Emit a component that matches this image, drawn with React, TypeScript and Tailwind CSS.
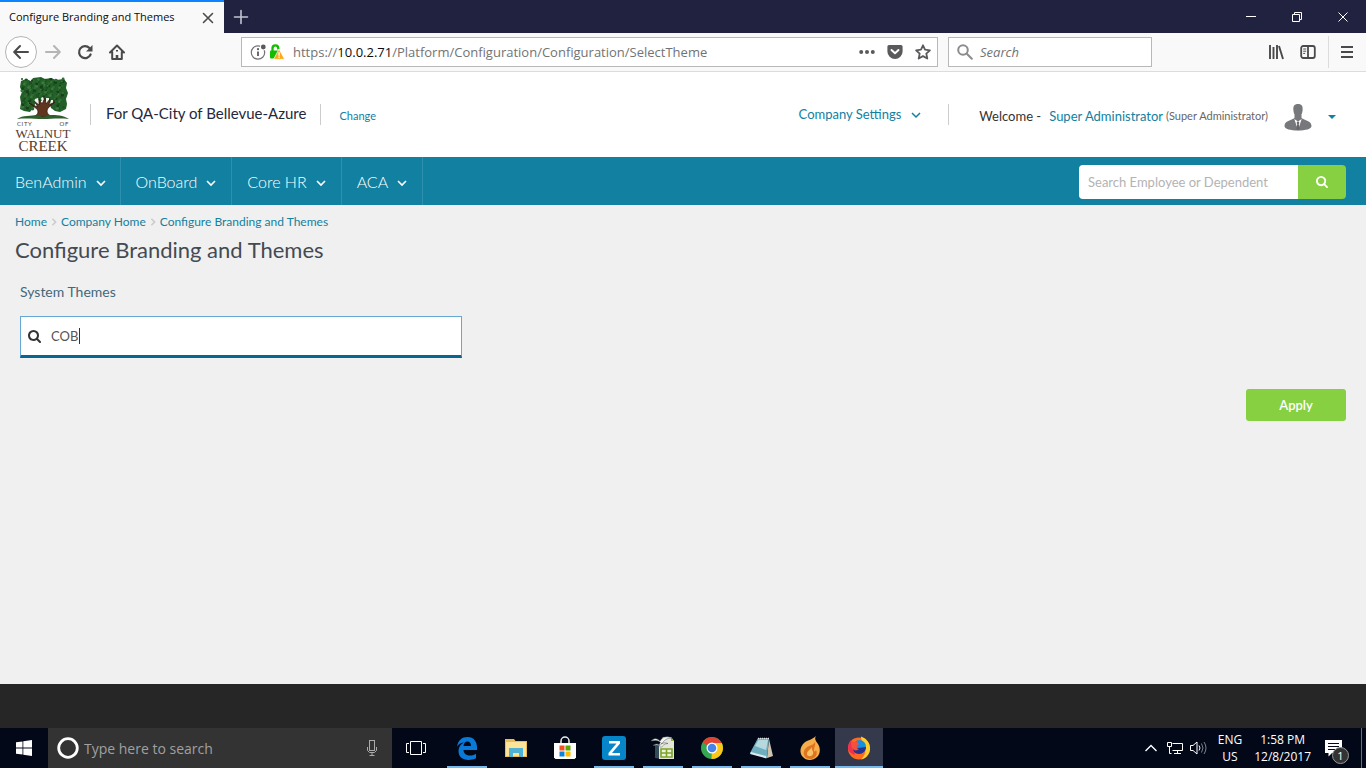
import { useState } from "react";
import type { ReactNode } from "react";

const uiFont = "font-['Open_Sans','Noto_Sans',sans-serif]";
const teal = "text-[#1280a1]";

function Magnifier({ className }: { className: string }) {
  return (
    <svg viewBox="0 0 1664 1664" className={className} fill="currentColor" aria-hidden="true">
      <path d="M1152 704q0-185-131.500-316.500t-316.500-131.500-316.500 131.500-131.500 316.500 131.500 316.500 316.500 131.500 316.500-131.500 131.500-316.500zM1664 1536q0 52-38 90t-90 38q-54 0-90-38l-343-342q-179 124-399 124-143 0-273.500-55.500t-225-150-150-225-55.500-273.500 55.500-273.500 150-225 225-150 273.500-55.500 273.500 55.500 225 150 150 225 55.500 273.500q0 220-124 399l343 343q37 37 37 90z" />
    </svg>
  );
}

function Chevron({ className, stroke = 2 }: { className: string; stroke?: number }) {
  return (
    <svg viewBox="0 0 10 10" className={className} fill="none" stroke="currentColor" strokeWidth={stroke} aria-hidden="true">
      <path d="M1 3l4 4 4-4" />
    </svg>
  );
}

function TitleBar() {
  return (
    <div className="flex h-[33px] bg-[#20223f]">
      <div className="flex w-56 items-center justify-between border-t-2 border-[#0a84ff] bg-[#f9f9fa] pr-2 pl-[9px]">
        <span className="text-[11px] whitespace-nowrap text-[#0c0c0d]">Configure Branding and Themes</span>
        <button aria-label="Close tab" className="flex size-4 items-center justify-center">
          <svg viewBox="0 0 16 16" className="size-4" stroke="#4a4a4c" strokeWidth="1.600" strokeLinecap="round">
            <path d="M3.500 3.500l9 9M12.500 3.500l-9 9" />
          </svg>
        </button>
      </div>
      <button aria-label="New tab" className="flex w-[34px] items-center justify-center">
        <svg viewBox="0 0 16 16" className="size-4" stroke="#c4c5d0" strokeWidth="1.600" strokeLinecap="round">
          <path d="M8 1.500v13M1.500 8h13" />
        </svg>
      </button>
      <div className="ml-auto flex text-white">
        <button aria-label="Minimize" className="flex w-[46px] items-center justify-center">
          <svg viewBox="0 0 10 10" className="size-2.5" stroke="currentColor" fill="none"><path d="M0 4.500h10" /></svg>
        </button>
        <button aria-label="Restore" className="flex w-[46px] items-center justify-center">
          <svg viewBox="0 0 10 10" className="size-2.5" stroke="currentColor" fill="none">
            <path d="M.5 2.500h7v7h-7zM2.500 2.500v-2h7v7h-2" />
          </svg>
        </button>
        <button aria-label="Close" className="flex w-[46px] items-center justify-center">
          <svg viewBox="0 0 10 10" className="size-2.5" stroke="currentColor" fill="none"><path d="M.5 .5l9 9M9.500 .5l-9 9" /></svg>
        </button>
      </div>
    </div>
  );
}

function Toolbar() {
  return (
    <div className="flex h-[39px] items-center border-b border-[#dcdcdd] bg-[#f9f9fa] pr-3 pl-[5px] text-[#4a4a4c]">
      <button aria-label="Back" className="flex size-8 items-center justify-center rounded-full border border-[#b4b4b5] bg-white">
        <svg viewBox="0 0 16 16" className="size-4" fill="none" stroke="currentColor" strokeWidth="2" strokeLinecap="round" strokeLinejoin="round">
          <path d="M15 8H1.500M7 2L1.200 8 7 14" />
        </svg>
      </button>
      <button aria-label="Forward" className="flex size-8 items-center justify-center text-[#b5b5b7]">
        <svg viewBox="0 0 16 16" className="size-4" fill="none" stroke="currentColor" strokeWidth="2" strokeLinecap="round" strokeLinejoin="round">
          <path d="M1 8h13.500M9 2l5.800 6L9 14" />
        </svg>
      </button>
      <button aria-label="Reload" className="flex size-8 items-center justify-center">
        <svg viewBox="0 0 16 16" className="size-4" fill="none" stroke="currentColor" strokeWidth="2.200">
          <path d="M13.600 10.500A6 6 0 1 1 12.400 4" strokeLinecap="round" />
          <path d="M15.500 1v6.500H9z" fill="currentColor" stroke="none" />
        </svg>
      </button>
      <button aria-label="Home" className="flex size-8 items-center justify-center">
        <svg viewBox="0 0 16 16" className="size-4" fill="none" stroke="currentColor" strokeWidth="2" strokeLinejoin="round" strokeLinecap="round">
          <path d="M1 8.500L8 1.500l7 7M3.200 8v7h9.600V8" />
          <path d="M8 15v-4" strokeWidth="2.600" strokeLinecap="butt" />
          <path d="M8 6v1.500" strokeWidth="2" strokeLinecap="butt" />
        </svg>
      </button>
      <div className="w-[108px]" />
      <div className="flex h-[30px] flex-1 items-center border border-[#b8b8b9] bg-white pr-1.5 pl-2">
        <svg viewBox="0 0 18 16" className="h-4 w-[18px]" fill="none" aria-hidden="true">
          <circle cx="8" cy="8.500" r="6.700" stroke="#737373" strokeWidth="1.200" />
          <path d="M8 7.500V12" stroke="#5a5a5c" strokeWidth="1.800" />
          <circle cx="8" cy="5.200" r="1.100" fill="#5a5a5c" />
          <circle cx="13.300" cy="3" r="3.400" fill="#fff" />
          <circle cx="13.300" cy="3" r="2.400" fill="#5a5a5c" />
        </svg>
        <svg viewBox="0 0 16 16" className="ml-px size-4" aria-hidden="true">
          <path d="M3.500 7.500V4.200a2.900 2.900 0 0 1 5.800 0V5.500" fill="none" stroke="#12bc00" strokeWidth="2.300" />
          <rect x="1" y="6.500" width="9" height="8" rx="1" fill="#12bc00" />
          <path d="M10 5l5.600 10.300H4.600z" fill="#ffa814" stroke="#fff" strokeWidth=".7" strokeLinejoin="round" />
          <path d="M10.100 8.300v3.400M10.100 12.600v1.500" stroke="#fff" strokeWidth="1.400" />
        </svg>
        <span className="ml-2 flex-1 pt-0.5 text-[13px] whitespace-nowrap text-[#737373]">
          https://<span className="text-[#0c0c0d]">10.0.2.71</span>/Platform/Configuration/Configuration/SelectTheme
        </span>
        <div className="flex items-center gap-3">
          <button aria-label="Page actions">
            <svg viewBox="0 0 16 16" className="size-4" fill="#5a5a5c"><circle cx="2.200" cy="8" r="2" /><circle cx="8" cy="8" r="2" /><circle cx="13.800" cy="8" r="2" /></svg>
          </button>
          <button aria-label="Save to Pocket">
            <svg viewBox="0 0 16 16" className="size-4">
              <path d="M2 1h12a1.600 1.600 0 0 1 1.600 1.600V7.400a7.600 7.600 0 0 1-15.200 0V2.600A1.600 1.600 0 0 1 2 1z" fill="#5a5a5c" />
              <path d="M4.500 6L8 9.300 11.500 6" fill="none" stroke="#fff" strokeWidth="1.900" strokeLinecap="round" strokeLinejoin="round" />
            </svg>
          </button>
          <button aria-label="Bookmark this page">
            <svg viewBox="0 0 16 16" className="size-4" fill="none" stroke="#5a5a5c" strokeWidth="1.800" strokeLinejoin="round">
              <path d="M8 1.300l2 4.400 4.900.6-3.600 3.300 1 4.900L8 12.100l-4.300 2.400 1-4.900L1.100 6.300 6 5.700z" />
            </svg>
          </button>
        </div>
      </div>
      <label className="ml-2.5 flex h-[30px] w-[204px] items-center border border-[#b8b8b9] bg-white pl-2">
        <svg viewBox="0 0 16 16" className="size-4 shrink-0" fill="none" stroke="#8c8c8e" strokeWidth="2" strokeLinecap="round" aria-hidden="true">
          <circle cx="6" cy="6" r="4.800" /><path d="M9.800 9.800l5 5" />
        </svg>
        <input aria-label="Web search" placeholder="Search" className="ml-[7px] min-w-0 flex-1 pt-0.5 text-[13px] italic outline-none placeholder:text-[#737373]" />
      </label>
      <div className="w-[116px]" />
      <button aria-label="Library" className="flex w-4">
        <svg viewBox="0 0 16 16" className="size-4" stroke="currentColor" strokeWidth="1.900">
          <path d="M2 1v14M5.500 3v12M9 1v14M11 2l4 13" />
        </svg>
      </button>
      <button aria-label="Sidebars" className="ml-4 flex w-4">
        <svg viewBox="0 0 16 16" className="size-4" fill="none" stroke="currentColor" strokeWidth="1.800">
          <rect x="1.200" y="2" width="13.600" height="12" rx="2" /><path d="M8 2v12" /><path d="M3.200 5h3M3.200 7.200h3M3.200 9.400h2" strokeWidth="1" />
        </svg>
      </button>
      <div className="mr-[11px] ml-3 h-8 w-px bg-[#dcdcdd]" />
      <button aria-label="Open menu" className="flex">
        <svg viewBox="0 0 14 14" className="size-3.5" stroke="currentColor" strokeWidth="2"><path d="M1 2h12M1 7h12M1 12h12" /></svg>
      </button>
    </div>
  );
}

const leafGreens = ["#1c5222", "#2d6b30", "#173f1c", "#3a7a38"];

const leaves = Array.from({ length: 190 }, (_, i) => ({
  x: 5 + ((i * 61) % 191) * 0.22,
  y: 3 + ((i * 37) % 97) * 0.31,
  r: 1 + (i % 3) * 0.4,
  fill: leafGreens[i % 4],
})).filter(({ x, y }) => !(y > 23 && x > 16 && x < 37));

function Logo() {
  return (
    <a href="#home" aria-label="City of Walnut Creek" className="flex w-14 flex-col items-center text-[#5a3a2a]">
      <svg viewBox="0 0 52 45" className="h-[45px] w-[52px]" aria-hidden="true">
        <path d="M4 5l5-2 5 2 2-3 8-1 4 2 6-1 5 2 8-1 3 4-1 5 2 5-2 6 1 5-1 5-6 3-5-1-4-3-2-7h-13l-2 6-4 5-6-1-4-2 1-6-1-6 2-5-2-5z" fill="#235f28" />
        {leaves.map((leaf, i) => (
          <circle key={i} cx={leaf.x} cy={leaf.y} r={leaf.r} fill={leaf.fill} />
        ))}
        <path d="M18 23l3-1 1 3-2 2-3-1zM24 22l2-1 1 3-2 2zM29 22l3 0 0 3-3 2zM34 24l2 0 0 3-3 1z" fill="#eef2ea" />
        <path d="M12 27l6 3 3 1-4-6 5 4 0-6 3 5 3-6 1 6 4-5-1 6 6-3-7 6c-2 4-1 6 4 9H16c5-2 6-5 4-8z" fill="#60361e" stroke="#2b1c12" strokeWidth=".8" />
        <path d="M0 43c6-4 14-3 20-4l6 2 6-2c8 0 14 0 20 4-10-1-18 0-26 0s-17-1-26 0z" fill="#2d5e2b" />
      </svg>
      <span className="flex w-full justify-between px-0.5 text-[6px] leading-[6px]"><span className="tracking-widest">CITY</span><span className="tracking-widest">OF</span></span>
      <span className="font-['Liberation_Serif',serif] text-[13px] leading-[13px]">WALNUT</span>
      <span className="font-['Liberation_Serif',serif] text-[15px] leading-[13px]">CREEK</span>
    </a>
  );
}

function SiteHeader() {
  return (
    <header className="flex h-[85px] items-center bg-white pr-[30px] pl-[15px]">
      <Logo />
      <div className="ml-[19px] h-[21px] w-px bg-[#ccc]" />
      <span className="ml-[15px] pb-0.5 text-[15px] text-[#23283c]">For QA-City of Bellevue-Azure</span>
      <div className="ml-3.5 h-[21px] w-px bg-[#ccc]" />
      <a href="#change" className={`ml-[18px] pt-[3px] text-[11px] ${teal}`}>Change</a>
      <button className={`ml-auto flex items-center gap-2.5 text-[13px] ${teal}`}>
        Company Settings
        <Chevron className="size-2.5" stroke={1.5} />
      </button>
      <div className="ml-[27px] h-[21px] w-px bg-[#ccc]" />
      <div className="ml-[30px] flex items-center pt-1 text-[13px] text-[#333]">
        <span>Welcome -</span>
        <a href="#profile" className={`ml-2 ${teal}`}>Super Administrator</a>
        <span className="ml-[3px] text-[11px] text-[#666]">(Super Administrator)</span>
        <svg viewBox="0 0 28 28" className="ml-4 size-7" aria-hidden="true">
          <path d="M14 1c3.500 0 5 2 4.600 6-.2 4-2 7-4.600 7S9.600 11 9.400 7C9 3 10.500 1 14 1z" fill="#77787b" />
          <path d="M10.500 12h7v3c3 2.500 10 2.500 10 8 0 3-6 4.500-13.500 4.500S.5 26 .5 23c0-5.500 7-5.500 10-8z" fill="#77787b" />
          <path d="M10.300 16l3.700 11 3.700-11-3.700 2.500z" fill="#fff" />
          <path d="M14 18l1.500 2-.8 1 1 5L14 27.500 12.300 26l1-5-.8-1z" fill="#66676a" />
        </svg>
        <svg viewBox="0 0 8 4" className={`ml-4 h-1 w-2 ${teal}`} fill="currentColor" aria-hidden="true"><path d="M0 0h8L4 4z" /></svg>
      </div>
    </header>
  );
}

function NavBar() {
  return (
    <nav className="flex h-12 items-center justify-between bg-[#1280a1] pr-5 text-white">
      <div className="flex h-full">
        {["BenAdmin", "OnBoard", "Core HR", "ACA"].map((label) => (
          <button key={label} className="flex items-center gap-[9px] border-r border-[#2c90ae] px-[15px] pt-0.5 text-base font-light first:pr-3.5">
            {label}
            <Chevron className="mt-0.5 size-2.5" stroke={1.6} />
          </button>
        ))}
      </div>
      <form className="mt-0.5 flex h-[34px]" onSubmit={(e) => e.preventDefault()}>
        <input aria-label="Search Employee or Dependent" placeholder="Search Employee or Dependent" className="w-[219px] rounded-l bg-white px-[9px] pt-0.5 text-[13px] text-[#333] outline-none placeholder:text-[#b3b3b3]" />
        <button aria-label="Search" className="flex w-12 items-center justify-center rounded-r bg-[#86d041]">
          <Magnifier className="size-3" />
        </button>
      </form>
    </nav>
  );
}

function Main() {
  const [theme, setTheme] = useState("COB");
  return (
    <main className="flex-1 bg-[#f0f0f0] pr-5 pl-[15px]">
      <div className={`flex items-center pt-2 text-xs leading-[18px] ${teal}`}>
        <a href="#home">Home</a>
        <Chevron className="mx-[3px] size-2 -rotate-90 text-[#ccc]" />
        <a href="#company">Company Home</a>
        <Chevron className="mx-[3px] size-2 -rotate-90 text-[#ccc]" />
        <a href="#themes">Configure Branding and Themes</a>
      </div>
      <h1 className="mt-1 text-[22px] leading-[30px] text-[#444a52]">Configure Branding and Themes</h1>
      <div className="pl-[5px]">
        <label htmlFor="theme" className="mt-[17px] block text-sm leading-5 text-[#44687a]">System Themes</label>
        <div className="mt-3.5 flex h-[42px] w-[442px] items-center border border-b-[3px] border-[#66a8d4] border-b-[#0a6690] bg-white pl-[7px]">
          <Magnifier className="size-[13px] shrink-0 text-[#333]" />
          <div className="relative ml-2.5 flex-1">
            <input id="theme" value={theme} onChange={(e) => setTheme(e.target.value)} className="block w-full text-[13px] leading-5 text-[#555] outline-none" />
            <span className="absolute top-0.5 left-7 h-4 w-px bg-[#333]" />
          </div>
        </div>
      </div>
      <div className="mt-[31px] flex justify-end">
        <button className="h-8 w-[100px] rounded-[3px] bg-[#86d041] pt-0.5 text-[13px] font-semibold text-white">Apply</button>
      </div>
    </main>
  );
}

const apps: { name: string; running: boolean; active?: boolean; art: ReactNode }[] = [
  { name: "Edge", running: true, art: <path d="M2 11C3 4 7 1 12.500 1 19 1 22 6 22 11v3H8.500c.3 4 3 5.500 6.500 5.500 2.500 0 4.500-.8 6-1.800v4.600c-2 1-4.500 1.700-7.500 1.700C7 24 3.500 20.500 3.500 15c0-4 2-6.800 5.500-8.500-4 .3-6 2-7 4.500zM8.500 10H16c0-3-1.300-4.500-3.600-4.500S8.700 7.500 8.500 10z" fill="#0a7ad8" /> },
  { name: "File Explorer", running: false, art: <><path d="M1 3h9l1.500 2H23v16H1z" fill="#e8bd54" /><path d="M2 6h20v14H2z" fill="#fbe39a" /><path d="M5 12h14v9h-4v-4H9v4H5z" fill="#4fb2d4" /></> },
  { name: "Store", running: false, art: <><path d="M8 7V5a4 4 0 0 1 8 0v2" fill="none" stroke="#eee" strokeWidth="1.500" /><path d="M1 7h22v14.500l-1.500 1.500h-19L1 21.500z" fill="#fff" /><path d="M6.500 9.500h5v5h-5z" fill="#f25022" /><path d="M12.500 9.500h5v5h-5z" fill="#5aa700" /><path d="M6.500 15.500h5v5h-5z" fill="#0a84d8" /><path d="M12.500 15.500h5v5h-5z" fill="#ffb900" /></> },
  { name: "Zoho", running: true, art: <><rect x="0" y="0" width="24" height="24" rx="3" fill="#0685c8" /><path d="M7 5h11v2.500L10 17h8v2.500H6.500V17l8-9.500H7z" fill="#fff" /></> },
  { name: "OpenOffice Calc", running: true, art: <><path d="M4 9h6v14l-6-1z" fill="#344b5b" /><path d="M12 1h8l3 4v18H8V9z" fill="#e4e6dc" /><path d="M20 1l3 4h-3z" fill="#8db52f" /><path d="M0 5c4-4 7-2 9 0 3-5 8-5 12-3-5 0-8 2-10 6-3-4-6-4-11-3zM2 9.500c3-2 5-2 7 0 2-3 5-3 8-2-4 0-5 2-7 4-2-3-4-3-8-2z" fill="#f5f5ee" stroke="#44505a" strokeWidth=".5" /><path d="M10 13h11v8H10zM15.500 13v8M10 17h11" fill="#eef3d8" stroke="#7da52a" strokeWidth="1.600" /></> },
  { name: "Chrome", running: true, art: <><circle cx="12" cy="12" r="11" fill="#36a852" /><path d="M12 12L2.500 6.500A11 11 0 0 1 21.600 7H12z" fill="#e04234" /><path d="M12 12V7h9.800A11 11 0 0 1 11.500 23z" fill="#fbc718" /><circle cx="12" cy="12" r="5.500" fill="#fff" /><circle cx="12" cy="12" r="4.300" fill="#4683ea" /></> },
  { name: "Notepad", running: true, art: <><path d="M20 3l4 17-6 2z" fill="#cfc5ae" /><path d="M9 2h11l-2 20-17-5z" fill="#6faebf" /><path d="M9.500 4h9.500l-2 10L6 10z" fill="#b4d9df" /><path d="M2 16l15 4 .5 2.500L1 18z" fill="#dceaec" /><path d="M9 2.500h11" stroke="#d8dfdf" strokeWidth="1.500" strokeDasharray="1 1" /></> },
  { name: "Flame", running: true, art: <><path d="M18 0c-2 3 0 5 2 8 3 5 2 10-1 13-4 4-11 4-14 0C1 17 2 11 6 7c3-3 8-3 12-7z" fill="#f7ae4a" /><path d="M17 6c-1 2-3 3-6 4-4 2-6 5-5 9 1 3 4 4 7 4 5-1 7-5 5-9-1 2-2 2-2 0 0-3 2-5 1-8z" fill="#dc7420" /><path d="M14 11c-1 3 2 4 1 7-1 3-6 3-6 0s3-4 5-7z" fill="#f9c06a" /></> },
  { name: "Firefox", running: false, active: true, art: <><circle cx="12" cy="12.500" r="11" fill="#ff6a1f" /><path d="M14 .5c6 2 9.500 7 9 13-.5 5-4 9-9 10 4-4 5-8 4-12S14 5 14 .5z" fill="#ffcf2e" /><path d="M1 13c0-4 1-7 3-9l2 3 2 12c-4-1-6-3-7-6z" fill="#f1304f" /><circle cx="12.500" cy="10.500" r="6.500" fill="#1590e0" /><path d="M11 12l8-1c0 4-3 7-7 7s-6-3-6-6z" fill="#26348b" /><path d="M4 5c2 1 4 1 6 1l2 2-2 2c-1 1 0 3 2 3-2 2-5 2-7-1-1-2-1-5-1-7z" fill="#f4503a" /></> },
];

function Taskbar() {
  return (
    <div className="flex h-10 bg-[#020818] text-white">
      <button aria-label="Start" className="flex w-12 items-center justify-center">
        <svg viewBox="0 0 16 16" className="size-4" fill="#fff"><path d="M0 2.300L6.500 1.400v6.200H0zM7.300 1.300L16 0v7.600H7.300zM0 8.400h6.500v6.200L0 13.700zM7.300 8.400H16V16l-8.700-1.300z" /></svg>
      </button>
      <label className="flex w-[344px] items-center bg-[#333] pr-3 pl-[9px]">
        <svg viewBox="0 0 22 22" className="size-[22px] shrink-0" aria-hidden="true"><circle cx="11" cy="11" r="9.300" fill="none" stroke="#fff" strokeWidth="2.800" /></svg>
        <input aria-label="Type here to search" placeholder="Type here to search" className="ml-[5px] min-w-0 flex-1 pt-0.5 text-sm outline-none placeholder:text-[#a0a0a0]" />
        <svg viewBox="0 0 16 18" className="h-[18px] w-4 shrink-0" fill="none" stroke="#aaa" aria-hidden="true"><rect x="5.500" y="1.500" width="5" height="10" /><path d="M3.500 8v3.500l2 2h5l2-2V8M8 13.500v3M5.500 16.500h5" /></svg>
      </label>
      <button aria-label="Task view" className="flex w-12 items-center justify-center">
        <svg viewBox="0 0 20 14" className="h-3.5 w-5" fill="none" stroke="#fff"><path d="M4.500 .5h11v13h-11zM3 2.500H.5v9H3M17 2.500h2.500v9H17" /></svg>
      </button>
      <div className="ml-[3px] flex gap-px">
        {apps.map((app) => (
          <button key={app.name} aria-label={app.name} className={`flex w-12 flex-col items-center justify-between ${app.active ? "bg-[#343a4c]" : ""}`}>
            <svg viewBox="0 0 24 24" className="mt-2 size-6">{app.art}</svg>
            <span className={`h-0.5 ${app.active ? "w-full bg-[#76b9ed]" : app.running ? "w-10 bg-[#76b9ed]" : "w-10"}`} />
          </button>
        ))}
      </div>
      <div className="ml-auto flex items-center">
        <svg viewBox="0 0 12 8" className="h-2 w-3" fill="none" stroke="#fff" strokeWidth="1.400" aria-label="Show hidden icons"><path d="M.5 7L6 1.500 11.500 7" /></svg>
        <svg viewBox="0 0 16 14" className="ml-2.5 h-3.5 w-4" fill="none" stroke="#fff" aria-label="Network"><path d="M5.500 2.500h10v7h-10M10.500 9.500v3M7 12.500h7M.5 1.500h4v4h-4zM2.500 5.500v7h2" /></svg>
        <svg viewBox="0 0 18 14" className="ml-[7px] h-3.5 w-[18px]" fill="none" stroke="#fff" aria-label="Volume"><path d="M.5 4.500h2.500l4-3.500v12L3 9.500H.5z" /><path d="M9 4.500q2 2.500 0 5" /><path d="M11.500 2.500q3 4.500 0 9M14 1q4 6 0 12" stroke="#7e818d" /></svg>
        <div className="ml-2.5 text-center text-xs leading-[17px]">ENG<br />US</div>
        <div className="ml-3 text-center text-xs leading-[17px] whitespace-nowrap">1:58 PM<br />12/8/2017</div>
        <div className="relative ml-3.5">
          <svg viewBox="0 0 17 17" className="size-[17px]" aria-label="Notifications"><path d="M0 0h17v13H7l-3.500 3.500V13H0z" fill="#fff" /><path d="M3 3.500h11M3 6.500h11M3 9.500h7" stroke="#020818" /></svg>
          <span className="absolute top-[7px] left-[7px] flex size-[17px] items-center justify-center rounded-full border border-[#999] bg-[#333] text-[11px] leading-none">1</span>
        </div>
        <div className="ml-[19px] h-10 w-px bg-[#6a6f7d]" />
        <div className="w-1" />
      </div>
    </div>
  );
}

export default function App() {
  return (
    <div className="flex min-h-screen flex-col">
      <div className={uiFont}>
        <TitleBar />
        <Toolbar />
      </div>
      <div className="flex flex-1 flex-col font-['Lato','Open_Sans',sans-serif]">
        <SiteHeader />
        <NavBar />
        <Main />
        <footer className="h-11 bg-[#262626]" />
      </div>
      <div className={uiFont}>
        <Taskbar />
      </div>
    </div>
  );
}
